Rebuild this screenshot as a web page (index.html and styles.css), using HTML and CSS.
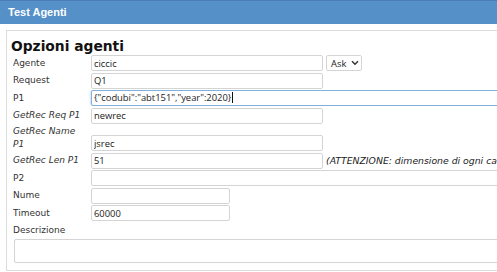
FILE: index.html
```html
<!DOCTYPE html>
<html>
<head>
<meta charset="utf-8">
<link rel="stylesheet" href="styles.css">
</head>
<body>
<div class="titlebar">Test Agenti</div>
<div class="panel">
  <h2 class="panel-title">Opzioni agenti</h2>
  <div class="form">
    <div class="row">
      <label class="lbl">Agente</label>
      <input class="inp w-md" type="text" value="ciccic">
      <div class="select"><span>Ask</span><svg width="8" height="6" viewBox="0 0 8 6"><path d="M1 1.2 L4 4.2 L7 1.2" fill="none" stroke="#333" stroke-width="1.5"/></svg></div>
    </div>
    <div class="row">
      <label class="lbl">Request</label>
      <input class="inp w-md" type="text" value="Q1">
    </div>
    <div class="row">
      <label class="lbl">P1</label>
      <div class="inp w-full focus">{"codubi":"abt151","year":2020}<span class="caret"></span></div>
    </div>
    <div class="row">
      <label class="lbl it">GetRec Req P1</label>
      <input class="inp w-md" type="text" value="newrec">
    </div>
    <div class="row bottom">
      <label class="lbl it">GetRec Name<br>P1</label>
      <input class="inp w-md" type="text" value="jsrec">
    </div>
    <div class="row">
      <label class="lbl it">GetRec Len P1</label>
      <input class="inp w-md" type="text" value="51">
      <span class="note">(ATTENZIONE: dimensione di ogni campo</span>
    </div>
    <div class="row">
      <label class="lbl">P2</label>
      <input class="inp w-full" type="text" value="">
    </div>
    <div class="row">
      <label class="lbl">Nume</label>
      <input class="inp w-sm" type="text" value="">
    </div>
    <div class="row">
      <label class="lbl">Timeout</label>
      <input class="inp w-sm" type="text" value="60000">
    </div>
    <div class="desc-label">Descrizione</div>
  </div>
  <textarea class="desc"></textarea>
</div>
</body>
</html>
```

FILE: styles.css
```css
html, body {
  margin: 0;
  padding: 0;
  background: #fff;
  overflow: hidden;
}
body {
  width: 497px;
  height: 272px;
  font-family: "DejaVu Sans", Verdana, sans-serif;
}
.titlebar {
  height: 23px;
  border-top: 1px solid #4a7db3;
  background: #5590c8;
  color: #fff;
  font-family: "Liberation Sans", Arial, sans-serif;
  font-weight: bold;
  font-size: 11px;
  line-height: 22px;
  padding-left: 8px;
}
.panel {
  margin: 6px 0 0 6px;
  border: 1px solid #dcdcdc;
  border-right: none;
  height: 241px;
  box-sizing: border-box;
  padding: 7px 0 0 4px;
  overflow: hidden;
}
.panel-title {
  margin: 0;
  font-size: 13.8px;
  font-weight: bold;
  line-height: 16px;
  color: #111;
}
.form {
  display: flex;
  flex-direction: column;
  row-gap: 1.5px;
  padding: 1px 0 0 2px;
}
.row {
  display: flex;
  align-items: center;
  min-height: 16px;
  white-space: nowrap;
  overflow: hidden;
}
.row.bottom {
  align-items: flex-end;
}
.lbl {
  width: 78px;
  flex: none;
  font-size: 9px;
  line-height: 13px;
  color: #333;
}
.lbl.it {
  font-style: italic;
}
.inp {
  box-sizing: border-box;
  height: 16px;
  border: 1px solid #d4d4d4;
  border-radius: 2px;
  padding: 0 2px;
  font-family: "Open Sans", sans-serif;
  font-size: 9.4px;
  color: #222;
  background: #fff;
  outline: none;
  margin: 0;
  flex: none;
  line-height: 14px;
}
.w-md { width: 232px; }
.w-sm { width: 139px; }
.w-full { width: 420px; }
.inp.focus {
  border-color: #7fb0e0;
  box-shadow: 0 0 3px rgba(102, 160, 220, 0.6);
}
.caret {
  display: inline-block;
  width: 1px;
  height: 11px;
  background: #111;
  vertical-align: -2px;
  margin-left: 1px;
}
.select {
  margin-left: 3px;
  box-sizing: border-box;
  height: 16px;
  width: 36px;
  border: 1px solid #d4d4d4;
  border-radius: 2px;
  display: flex;
  align-items: center;
  gap: 5px;
  padding-left: 4px;
  font-family: "Open Sans", sans-serif;
  font-size: 9.4px;
  color: #222;
  flex: none;
}
.note {
  margin-left: 3px;
  font-size: 9.3px;
  font-style: italic;
  color: #222;
}
.desc-label {
  font-size: 9px;
  line-height: 13px;
  color: #333;
  margin-top: 1px;
}
.desc {
  display: block;
  margin: 2px 0 0 3px;
  width: 500px;
  height: 24px;
  box-sizing: border-box;
  border: 1px solid #d4d4d4;
  border-radius: 2px;
  resize: none;
  outline: none;
}
```
